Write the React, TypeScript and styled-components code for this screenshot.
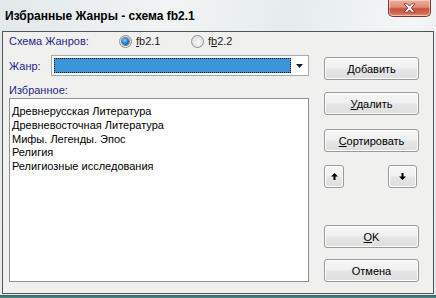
import React from "react";
import styled, { createGlobalStyle } from "styled-components";

const Global = createGlobalStyle`
  html, body { margin: 0; padding: 0; background: #ffffff; }
  body { font-family: "Liberation Sans", Arial, sans-serif; font-size: 11px; }
`;

const Window = styled.div`
  width: 436px;
  height: 298px;
  display: flex;
  flex-direction: column;
  box-sizing: border-box;
  background: linear-gradient(100deg, #e2e8eb 0%, #f1f4f5 35%, #e6ecee 60%, #f3f6f7 85%, #e2e8eb 100%);
  overflow: hidden;
`;

const TitleBar = styled.div`
  height: 31px;
  flex: none;
  display: flex;
  align-items: flex-start;
  justify-content: space-between;
  padding: 0 5px 0 5px;
  box-sizing: border-box;
`;

const Title = styled.div`
  font-family: "Liberation Sans", Arial, sans-serif;
  font-weight: bold;
  font-size: 12px;
  color: #000;
  margin-top: 9px;
  line-height: 14px;
`;

const CloseButton = styled.div`
  width: 43px;
  height: 17px;
  box-sizing: border-box;
  border: 1px solid #7a3526;
  border-top: none;
  border-radius: 0 0 5px 5px;
  background: linear-gradient(#eeb2a2 0%, #df8b74 45%, #c9503a 55%, #d46a52 85%, #e8a08a 100%);
  box-shadow: inset 0 0 0 1px rgba(255, 225, 215, 0.55);
  display: flex;
  align-items: center;
  justify-content: center;
`;

const Client = styled.div`
  flex: 1;
  margin: 0 2px;
  border: 1px solid #4d5758;
  background: #f0f0ee;
  display: flex;
  flex-direction: column;
  padding: 0 14px 0 6px;
  min-height: 0;
`;

const BottomFrame = styled.div`
  height: 4px;
  flex: none;
  background: linear-gradient(#e6ecec 0, #e6ecec 1px, #2f6463 1px, #4c8d8a 100%);
`;

const SchemeRow = styled.div`
  height: 18px;
  display: flex;
  align-items: center;
`;

const Label = styled.span<{ $w?: number }>`
  color: #1f1f8a;
  font-size: 11px;
  line-height: 14px;
  width: ${(p) => (p.$w ? `${p.$w}px` : "auto")};
  flex: none;
  white-space: nowrap;
`;

const RadioOption = styled.label<{ $w: number }>`
  display: flex;
  align-items: center;
  width: ${(p) => p.$w}px;
  color: #222;
  font-size: 11px;
`;

const RadioCircle = styled.span<{ $checked?: boolean }>`
  width: 13px;
  height: 13px;
  box-sizing: border-box;
  border-radius: 50%;
  border: 1px solid #929292;
  background: radial-gradient(circle at 60% 60%, #f9f9f9 0%, #e0e0e0 70%, #d2d2d2 100%);
  margin-right: 4px;
  display: flex;
  align-items: center;
  justify-content: center;
  flex: none;
  &::after {
    content: "";
    display: ${(p) => (p.$checked ? "block" : "none")};
    width: 7px;
    height: 7px;
    border-radius: 50%;
    background: radial-gradient(circle at 40% 35%, #8fd0ff 0%, #2b7fd0 45%, #0b3f7d 100%);
    box-shadow: 0 0 0 1px rgba(12, 60, 120, 0.6);
  }
`;

const Main = styled.div`
  margin-top: 5px;
  display: grid;
  grid-template-columns: 300px 95px;
  column-gap: 15px;
  flex: 1;
`;

const LeftCol = styled.div`
  display: flex;
  flex-direction: column;
`;

const RightCol = styled.div`
  display: flex;
  flex-direction: column;
`;

const ComboRow = styled.div`
  height: 21px;
  display: flex;
  align-items: center;
`;

const Combo = styled.div`
  width: 258px;
  height: 21px;
  box-sizing: border-box;
  border: 1px solid #a7abb0;
  background: #fff;
  display: flex;
  align-items: stretch;
  padding: 2px 0 2px 2px;
`;

const ComboSelection = styled.div`
  flex: 1;
  background: #3b95d8;
  outline: 1px dotted #111;
  outline-offset: -1px;
`;

const ComboArrow = styled.div`
  width: 17px;
  display: flex;
  align-items: center;
  justify-content: center;
`;

const SectionLabel = styled(Label)`
  margin-top: 7px;
  height: 14px;
`;

const ListBox = styled.div`
  margin-top: 1px;
  height: 184px;
  box-sizing: border-box;
  border: 1px solid #8e9090;
  background: #fff;
  padding: 6px 2px 0 2px;
`;

const ListItem = styled.div`
  font-size: 11px;
  line-height: 13.75px;
  color: #000;
  white-space: nowrap;
`;

const Button = styled.button<{ $mt: number; $w?: number }>`
  margin-top: ${(p) => p.$mt}px;
  width: ${(p) => (p.$w ? `${p.$w}px` : "100%")};
  height: 23px;
  box-sizing: border-box;
  border: 1px solid #9a9a9a;
  border-radius: 3px;
  background: linear-gradient(#f6f6f6 0%, #f0f0f0 48%, #e6e6e6 52%, #dedede 100%);
  box-shadow: inset 0 0 0 1px rgba(255, 255, 255, 0.9);
  font-family: "Liberation Sans", Arial, sans-serif;
  font-size: 11px;
  color: #000;
  padding: 0;
  display: flex;
  align-items: center;
  justify-content: center;
  flex: none;
`;

const ArrowRow = styled.div`
  display: flex;
  justify-content: space-between;
  padding-right: 2px;
`;

const Acc = styled.span`
  text-decoration: underline;
  text-underline-offset: 1px;
`;

const items = [
  "Древнерусская Литература",
  "Древневосточная Литература",
  "Мифы. Легенды. Эпос",
  "Религия",
  "Религиозные исследования",
];

export default function App() {
  return (
    <>
      <Global />
      <Window>
        <TitleBar>
          <Title>Избранные Жанры - схема fb2.1</Title>
          <CloseButton>
            <svg width="13" height="10" viewBox="0 0 13 10">
              <path
                d="M1 0.8 H4.3 L6.5 3.2 L8.7 0.8 H12 L8.2 5 L12 9.2 H8.7 L6.5 6.8 L4.3 9.2 H1 L4.8 5 Z"
                fill="#ffffff"
                stroke="#6a3328"
                strokeWidth="0.8"
                strokeLinejoin="round"
              />
            </svg>
          </CloseButton>
        </TitleBar>
        <Client>
          <SchemeRow>
            <Label $w={110}>Схема Жанров:</Label>
            <RadioOption $w={72}>
              <RadioCircle $checked />
              <span>
                <Acc>f</Acc>b2.1
              </span>
            </RadioOption>
            <RadioOption $w={60}>
              <RadioCircle />
              <span>
                f<Acc>b</Acc>2.2
              </span>
            </RadioOption>
          </SchemeRow>
          <Main>
            <LeftCol>
              <ComboRow>
                <Label $w={42}>Жанр:</Label>
                <Combo>
                  <ComboSelection />
                  <ComboArrow>
                    <svg width="7" height="4" viewBox="0 0 7 4">
                      <path d="M0 0 H7 L3.5 4 Z" fill="#1a1a3a" />
                    </svg>
                  </ComboArrow>
                </Combo>
              </ComboRow>
              <SectionLabel>Избранное:</SectionLabel>
              <ListBox>
                {items.map((t) => (
                  <ListItem key={t}>{t}</ListItem>
                ))}
              </ListBox>
            </LeftCol>
            <RightCol>
              <Button $mt={2}>
                <span>
                  <Acc>Д</Acc>обавить
                </span>
              </Button>
              <Button $mt={12}>
                <span>
                  <Acc>У</Acc>далить
                </span>
              </Button>
              <Button $mt={14}>
                <span>
                  <Acc>С</Acc>ортировать
                </span>
              </Button>
              <ArrowRow>
                <Button $mt={13} $w={20}>
                  <svg width="7" height="7" viewBox="0 0 7 7">
                    <path d="M3.5 0 L7 3.5 H4.5 V7 H2.5 V3.5 H0 Z" fill="#000" />
                  </svg>
                </Button>
                <Button $mt={13} $w={29}>
                  <svg width="7" height="7" viewBox="0 0 7 7">
                    <path d="M3.5 7 L7 3.5 H4.5 V0 H2.5 V3.5 H0 Z" fill="#000" />
                  </svg>
                </Button>
              </ArrowRow>
              <Button $mt={37}>
                <span>
                  <Acc>O</Acc>K
                </span>
              </Button>
              <Button $mt={11}>Отмена</Button>
            </RightCol>
          </Main>
        </Client>
        <BottomFrame />
      </Window>
    </>
  );
}
